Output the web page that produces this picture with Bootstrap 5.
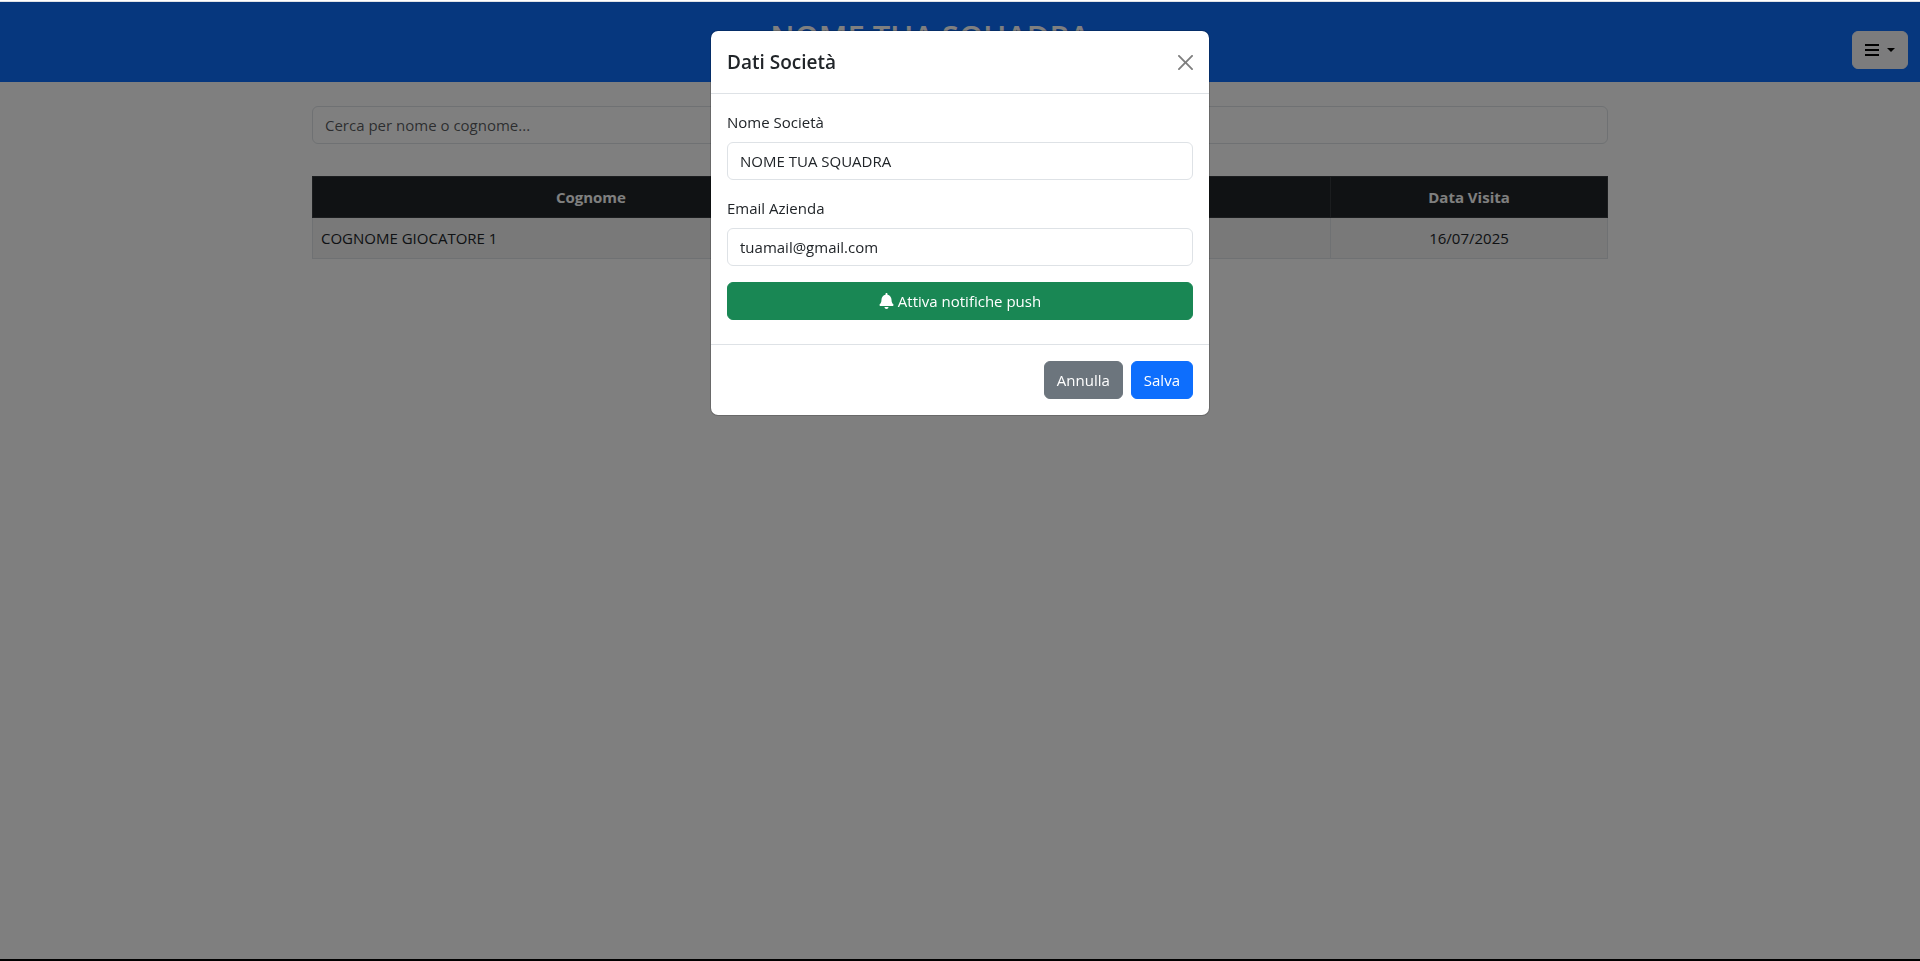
<!DOCTYPE html>
<html lang="it">
<head>
<meta charset="utf-8">
<meta name="viewport" content="width=device-width, initial-scale=1">
<title>Visite mediche</title>
<link href="https://cdn.jsdelivr.net/npm/bootstrap@5.3.0/dist/css/bootstrap.min.css" rel="stylesheet">
<style>
  body, .form-control, .btn {
    font-family: "Segoe UI", "Open Sans", sans-serif;
    font-size: 15px;
    line-height: 24px;
  }
  .edge-top { height: 2px; background: #fff; border-bottom: 1px solid #dfe1e5; z-index: 1100; }
  .edge-bottom { height: 2px; background: #000; z-index: 1100; }
  .page { padding-top: 2px; }
  .topbar { padding: 15px 12px 13px; }
  .topbar h1 { font-size: 31px; line-height: 38px; font-weight: 600; margin-bottom: 14px; }
  .menu-btn { width: 56px; height: 38px; }
  .icon { display: inline-block; fill: currentColor; }
  .col-surname { width: 43%; }
  .col-date { width: 277px; }
  .team-modal { padding-top: 2px; }
  .team-modal .modal-title { font-size: 19px; line-height: 30px; font-weight: 600; }
</style>
</head>
<body>
<div class="edge-top fixed-top"></div>
<div class="page">
  <header class="topbar bg-primary text-white d-flex align-items-end">
    <h1 class="flex-grow-1 text-center pe-1">NOME TUA SQUADRA</h1>
    <div class="dropdown">
      <button class="btn btn-light dropdown-toggle menu-btn d-flex align-items-center justify-content-between" type="button" data-bs-toggle="dropdown" aria-label="Menu">
        <svg class="icon" width="14" height="16" viewBox="0 0 14 16" aria-hidden="true"><path d="M0 2h14v2H0zM0 7h14v2H0zM0 12h14v2H0z"/></svg>
      </button>
    </div>
  </header>

  <main class="container mt-4">
    <input type="search" class="form-control mb-4" aria-label="Cerca" placeholder="Cerca per nome o cognome...">
    <div class="pt-2">
      <table class="table table-bordered table-striped align-middle">
        <thead class="table-dark text-center">
          <tr><th class="col-surname">Cognome</th><th>Nome</th><th class="col-date">Data Visita</th></tr>
        </thead>
        <tbody>
          <tr><td>COGNOME GIOCATORE 1</td><td>NOME GIOCATORE 1</td><td class="text-center">16/07/2025</td></tr>
        </tbody>
      </table>
    </div>
  </main>
</div>

<div class="modal-backdrop show"></div>
<div class="modal team-modal show d-block" tabindex="-1" role="dialog" aria-labelledby="teamTitle">
  <div class="modal-dialog">
    <form class="modal-content">
      <div class="modal-header">
        <h5 class="modal-title" id="teamTitle">Dati Società</h5>
        <button type="button" class="btn-close" aria-label="Chiudi"></button>
      </div>
      <div class="modal-body pb-4">
        <div class="mb-3">
          <label for="teamName" class="form-label">Nome Società</label>
          <input type="text" class="form-control" id="teamName" value="NOME TUA SQUADRA">
        </div>
        <div class="mb-3">
          <label for="teamMail" class="form-label">Email Azienda</label>
          <input type="email" class="form-control" id="teamMail" value="tuamail@gmail.com">
        </div>
        <button type="button" class="btn btn-success w-100 d-flex align-items-center justify-content-center gap-1">
          <svg class="icon" width="15" height="16" viewBox="0 0 448 512" aria-hidden="true"><path d="M224 512c35.300 0 63.900-28.700 63.900-64H160.100c0 35.300 28.600 64 63.900 64zm215.400-149.700c-19.300-20.800-55.500-52-55.500-154.300 0-77.700-54.500-139.900-127.900-155.200V32c0-17.700-14.300-32-32-32s-32 14.300-32 32v20.800C118.600 68.100 64.100 130.300 64.100 208c0 102.300-36.200 133.500-55.500 154.300-6 6.400-8.700 14.100-8.600 21.700.1 16.400 13 32 32.100 32h383.800c19.100 0 32-15.600 32.100-32 .1-7.600-2.600-15.300-8.600-21.700z"/></svg>
          <span>Attiva notifiche push</span>
        </button>
      </div>
      <div class="modal-footer">
        <button type="button" class="btn btn-secondary">Annulla</button>
        <button type="submit" class="btn btn-primary">Salva</button>
      </div>
    </form>
  </div>
</div>
<div class="edge-bottom fixed-bottom"></div>
<script src="https://cdn.jsdelivr.net/npm/bootstrap@5.3.0/dist/js/bootstrap.bundle.min.js"></script>
</body>
</html>
